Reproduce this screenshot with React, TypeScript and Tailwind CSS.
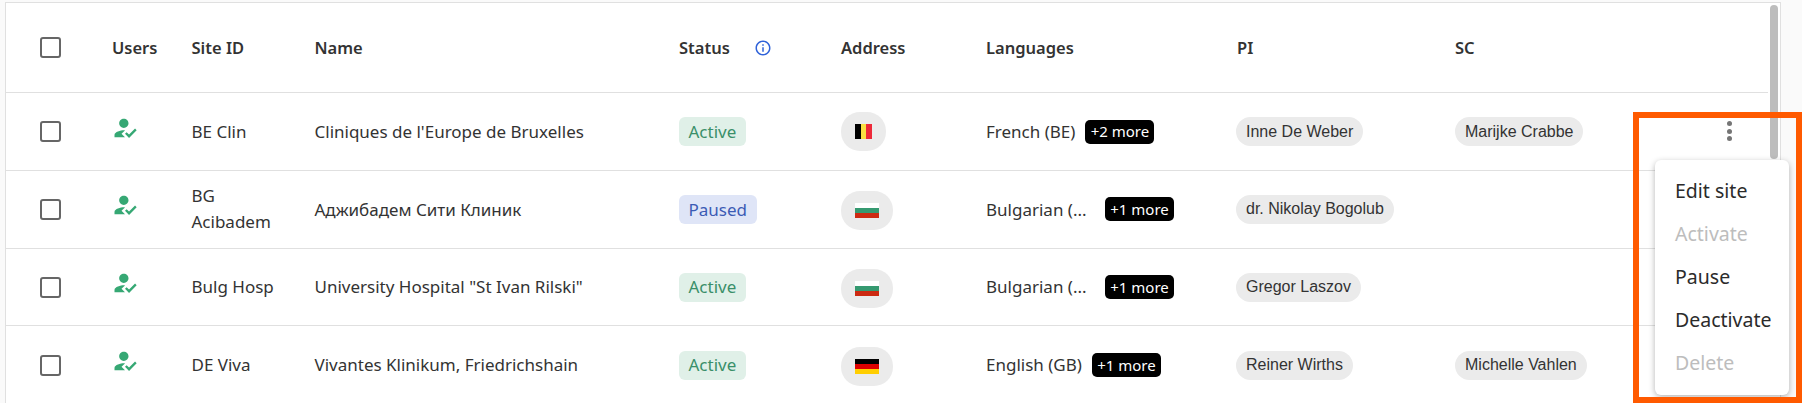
import React from "react";

const gridCols = "grid grid-cols-[34px_72px_79.5px_123px_364.5px_162px_145px_251px_218px_1fr] items-center";

type Site = {
  id: string;
  name: string;
  status: "Active" | "Paused";
  flag: "be" | "bg" | "de";
  lang: string;
  more: string;
  truncate?: boolean;
  pi: string;
  sc?: string;
};

const sites: Site[] = [
  { id: "BE Clin", name: "Cliniques de l'Europe de Bruxelles", status: "Active", flag: "be", lang: "French (BE)", more: "+2 more", pi: "Inne De Weber", sc: "Marijke Crabbe" },
  { id: "BG Acibadem", name: "Аджибадем Сити Клиник", status: "Paused", flag: "bg", lang: "Bulgarian (Bulgaria)", more: "+1 more", truncate: true, pi: "dr. Nikolay Bogolub" },
  { id: "Bulg Hosp", name: 'University Hospital "St Ivan Rilski"', status: "Active", flag: "bg", lang: "Bulgarian (Bulgaria)", more: "+1 more", truncate: true, pi: "Gregor Laszov" },
  { id: "DE Viva", name: "Vivantes Klinikum, Friedrichshain", status: "Active", flag: "de", lang: "English (GB)", more: "+1 more", pi: "Reiner Wirths", sc: "Michelle Vahlen" },
];

const menuItems = [
  { label: "Edit site", disabled: false },
  { label: "Activate", disabled: true },
  { label: "Pause", disabled: false },
  { label: "Deactivate", disabled: false },
  { label: "Delete", disabled: true },
];

function Checkbox() {
  return <div className="w-[21px] h-[21px] -ml-[0.5px] rounded-[3px] border-[2.5px] border-[#666666] bg-white" />;
}

function UserIcon() {
  return (
    <svg viewBox="0 0 24 24" className="w-[28px] h-[28px] ml-[-1px] mb-[8px] fill-[#36a874]">
      <path d="M9 17l3-2.94c-.39-.04-.68-.06-1-.06-2.67 0-8 1.34-8 4v2h9l-3-3zm2-5c2.21 0 4-1.79 4-4s-1.79-4-4-4-4 1.79-4 4 1.79 4 4 4m4.47 8.5L12 17l1.4-1.41 2.07 2.08 5.13-5.17 1.4 1.41z" />
    </svg>
  );
}

function InfoIcon() {
  return (
    <svg viewBox="0 0 24 24" className="w-[18px] h-[18px] fill-[#2f62d9]">
      <path d="M11 7h2v2h-2zm0 4h2v6h-2zm1-9C6.48 2 2 6.48 2 12s4.48 10 10 10 10-4.48 10-10S17.52 2 12 2m0 18c-4.41 0-8-3.59-8-8s3.59-8 8-8 8 3.59 8 8-3.59 8-8 8" />
    </svg>
  );
}

function Flag({ code }: { code: Site["flag"] }) {
  if (code === "be") {
    return (
      <div className="flex w-[17px] h-[15px]">
        <div className="flex-1 bg-black" />
        <div className="flex-1 bg-[#fae042]" />
        <div className="flex-1 bg-[#ed2939]" />
      </div>
    );
  }
  const colors =
    code === "bg"
      ? ["bg-white", "bg-[#359970]", "bg-[#cc2a12]"]
      : ["bg-black", "bg-[#dd0000]", "bg-[#ffce00]"];
  return (
    <div className="flex flex-col w-[24px] h-[15px]">
      {colors.map((c) => (
        <div key={c} className={"flex-1 " + c} />
      ))}
    </div>
  );
}

function PersonChip({ name }: { name: string }) {
  return (
    <span className="inline-flex items-center justify-self-start h-[29px] px-[10px] rounded-full bg-[#ebebeb] text-[16px] text-[#333333] font-['Liberation_Sans',sans-serif] whitespace-nowrap">
      {name}
    </span>
  );
}

function Row({ site, index }: { site: Site; index: number }) {
  const rowHeight = index === 0 ? " h-[78px]" : " h-[77.7px]";
  return (
    <div className={gridCols + rowHeight + (index === 3 ? "" : " border-b border-[#e0e0e0]")}>
      <div />
      <Checkbox />
      <div className="col-start-3 flex items-center"><UserIcon /></div>
      <div className="leading-[26px] pr-[20px]">{site.id}</div>
      <div className="whitespace-nowrap">{site.name}</div>
      <div>
        <span
          className={
            site.status === "Active"
              ? "inline-flex items-center h-[29px] px-[9.5px] rounded-[6px] bg-[#e0f0e8] text-[#3a8f6a]"
              : "inline-flex items-center h-[29px] px-[9.5px] rounded-[6px] bg-[#dfe5f7] text-[#3b5bb5]"
          }
        >
          {site.status}
        </span>
      </div>
      <div>
        <div className={"inline-flex items-center pl-[14px] h-[39px] rounded-[19px] bg-[#ebebeb] " + (site.flag === "be" ? "w-[45px]" : "w-[52px]")}>
          <Flag code={site.flag} />
        </div>
      </div>
      <div className="flex items-center col-span-1 whitespace-nowrap">
        <span className={site.truncate ? "w-[119px]" : "mr-[10px]"}>
          {site.truncate ? "Bulgarian (..." : site.lang}
        </span>
        <span className="inline-flex items-center justify-center w-[69px] h-[24px] rounded-[5px] bg-black text-white text-[15px]">
          {site.more}
        </span>
      </div>
      <div className="-ml-[1px]"><PersonChip name={site.pi} /></div>
      <div>{site.sc ? <PersonChip name={site.sc} /> : null}</div>
    </div>
  );
}

export default function App() {
  return (
    <div className="relative h-[403px] w-full overflow-hidden bg-[#fafafa] pl-[5px] pr-[21px] pt-[2px] font-['Noto_Sans',sans-serif] text-[17px] text-[#333333]">
      <div className="flex h-[401px] bg-white border-l border-t border-r border-[#e0e0e0]">
        <div className="flex-1">
          <div className={gridCols + " h-[90px] border-b border-[#e0e0e0] font-semibold text-[16.5px]"}>
            <div />
            <Checkbox />
            <div className="col-start-3 pt-[1px]">Users</div>
            <div className="pt-[1px]">Site ID</div>
            <div className="pt-[1px]">Name</div>
            <div className="flex items-center pt-[1px]">
              <span className="w-[75px]">Status</span>
              <InfoIcon />
            </div>
            <div className="pt-[1px]">Address</div>
            <div className="pt-[1px]">Languages</div>
            <div className="pt-[1px]">PI</div>
            <div className="pt-[1px]">SC</div>
          </div>
          {sites.map((site, i) => (
            <Row key={site.id} site={site} index={i} />
          ))}
        </div>
        <div className="w-[12px] px-[2px] pt-[2px]">
          <div className="h-[154px] rounded-full bg-[#bdbdbd]" />
        </div>
      </div>

      {/* row action button */}
      <div className="absolute left-[1727px] top-[121px] flex flex-col gap-[2.5px]">
        <span className="w-[5px] h-[5px] rounded-full bg-[#757575]" />
        <span className="w-[5px] h-[5px] rounded-full bg-[#757575]" />
        <span className="w-[5px] h-[5px] rounded-full bg-[#757575]" />
      </div>

      {/* open menu */}
      <div className="absolute left-[1655px] top-[160px] w-[134px] pt-[9px] pb-[11px] rounded-[6px] bg-white shadow-[0_2px_6px_rgba(0,0,0,0.3)] text-[19.5px]">
        {menuItems.map((item) => (
          <div
            key={item.label}
            className={"flex items-center h-[43px] pl-[20px] " + (item.disabled ? "text-[#bdbdbd]" : "text-[#2b2b2b]")}
          >
            {item.label}
          </div>
        ))}
      </div>

      {/* highlight annotation */}
      <div className="absolute left-[1633px] top-[112px] w-[169px] h-[291px] border-[6px] border-[#ff5a00] pointer-events-none" />
    </div>
  );
}
